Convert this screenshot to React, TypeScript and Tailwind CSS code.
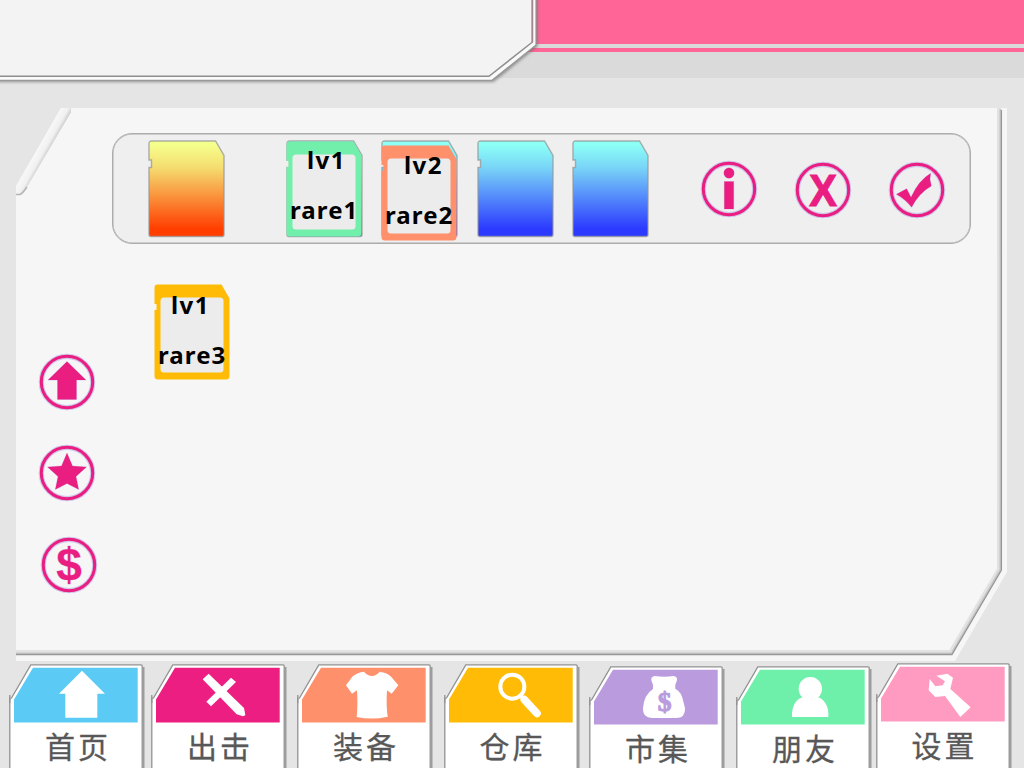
import type { ReactNode } from "react";

const CARD_PATH =
  "M3.5 1 H67.5 L76 15.5 V94.5 Q76 96.5 74 96.5 H3 Q1 96.5 1 94.5 V27.5 H3.5 V20 H1 V3.5 Q1 1 3.5 1 Z";

function SlotCard({ id, from, mid, to }: { id: string; from: string; mid: string; to: string }) {
  return (
    <svg width="77" height="98" viewBox="0 0 77 98" className="block">
      <defs>
        <linearGradient id={id} x1="0" y1="0" x2="0" y2="1">
          <stop offset="0.04" stopColor={from} />
          <stop offset="0.28" stopColor={mid} />
          <stop offset="0.92" stopColor={to} />
        </linearGradient>
      </defs>
      <path d={CARD_PATH} fill={`url(#${id})`} stroke="#969696" strokeOpacity="0.75" strokeWidth="1.4" />
    </svg>
  );
}

function ItemCard({ color, level, rare, shift = "" }: { color: string; level: string; rare: string; shift?: string }) {
  return (
    <div className="relative h-[96px] w-[76px] font-['Noto_Sans',sans-serif] text-[24px] leading-[30px] font-bold text-black">
      <svg width="76" height="96" viewBox="0 0 76 96" className="absolute inset-0">
        <path
          d="M3.5 .5 H67.5 L75.5 14.5 V92 Q75.5 95.5 72 95.5 H4 Q.5 95.5 .5 92 V26 H2.5 V20 H.5 V3.5 Q.5 .5 3.5 .5 Z"
          fill={color}
        />
        <rect x="6.5" y="13.5" width="63" height="75" rx="3.5" fill="#ececec" />
      </svg>
      <div className="relative flex flex-col whitespace-nowrap">
        <span className={`pl-[17px] tracking-[1.4px] ${shift}`}>{level}</span>
        <span className="mt-[20px] pl-[4px] tracking-[1.1px]">{rare}</span>
      </div>
    </div>
  );
}

function RoundButton({ label, children }: { label: string; children: ReactNode }) {
  return (
    <button aria-label={label} className="block size-[58px]">
      <svg width="58" height="58" viewBox="-29 -29 58 58" fill="#e91e80">
        <circle r="25.7" fill="none" stroke="#b9a6e6" strokeOpacity="0.6" strokeWidth="5.2" />
        <circle r="25.7" fill="none" stroke="#e91e80" strokeWidth="3" />
        <g stroke="#c9b5ec" strokeOpacity="0.6" strokeWidth="1" paintOrder="stroke">
          {children}
        </g>
      </svg>
    </button>
  );
}

type Tab = { label: string; color: string; place: string; icon: ReactNode };

const tabs: Tab[] = [
  {
    label: "首页",
    color: "#5bcaf5",
    place: "ml-[9px] mt-[3px]",
    icon: <path transform="translate(-27 -57)" d="M246 77 L315 146 H292 V218 H196 V146 H177 Z" />,
  },
  {
    label: "出击",
    color: "#ed1e82",
    place: "ml-[7px] mt-[3px]",
    icon: (
      <g transform="translate(-453 -57)">
        <path d="M626 86 L732 189 L736 211 L729 214 L710 208 L608 103 Z" strokeLinejoin="round" />
        <path d="M693 98 L708 111 L633 184 L619 170 Z" />
      </g>
    ),
  },
  {
    label: "装备",
    color: "#ff906c",
    place: "ml-[11px] mt-[3px]",
    icon: (
      <path
        transform="translate(-21 -57)"
        d="M222 80 Q246 106 269 80 Q292 83 304 96 L325 121 L305 146 L291 136 Q288 180 293 215 Q246 226 200 216 Q204 180 201 136 L186 146 L168 121 L188 94 Q202 82 222 80 Z"
      />
    ),
  },
  {
    label: "仓库",
    color: "#ffbb05",
    place: "ml-[11.5px] mt-[3px]",
    icon: (
      <g transform="translate(-460 -57)" fill="none" stroke="white">
        <circle cx="665" cy="125" r="36" strokeWidth="12" />
        <path d="M690 152 L704 168" strokeWidth="12" />
        <path d="M701 164 L739 205" strokeWidth="23" strokeLinecap="round" />
      </g>
    ),
  },
  {
    label: "市集",
    color: "#b99bde",
    place: "ml-[10.5px] mt-[5px]",
    icon: (
      <g transform="translate(-27 -63)">
        <path d="M224 93 Q253 97 281 93 Q295 96 290 109 Q284 119 286 131 Q305 142 309 166 L315 189 Q317 219 288 219 H216 Q187 219 189 190 Q192 149 219 132 Q221 119 215 109 Q210 96 224 93 Z" />
        <text
          x="254"
          y="199"
          textAnchor="middle"
          stroke="#b99bde"
          strokeWidth="3"
          className="font-['Liberation_Serif',serif] text-[83px] font-bold"
          fill="#b99bde"
        >
          $
        </text>
      </g>
    ),
  },
  {
    label: "朋友",
    color: "#6ef0ab",
    place: "ml-[12px] mt-[5px]",
    icon: (
      <g transform="translate(-468 -63)">
        <circle cx="691" cy="131" r="35" />
        <path d="M636 216 C635 180 650 160 671 156 L691 150 L711 156 C733 160 748 185 745 216 Z" />
      </g>
    ),
  },
  {
    label: "设置",
    color: "#ff9bc1",
    place: "ml-[4.5px] mt-[2px]",
    icon: (
      <path
        transform="translate(-48 -54)"
        d="M229 92 L262 86 L279 98 L271 132 L332 187 L301 216 L255 153 L226 156 L206 136 L209 102 L226 124 L248 121 L255 109 Z"
      />
    ),
  },
];

function NavTab({ label, color, place, icon }: Tab) {
  return (
    <a className={`relative h-[101px] w-[135px] shrink-0 ${place}`}>
      <svg width="139" height="112" viewBox="0 0 139 112" className="absolute top-0 left-0">
        <path d="M134.6 3 V112" stroke="#777777" strokeOpacity="0.65" strokeWidth="1.8" />
        <path d="M.8 112 V34.5 L2.5 34 L21.8 .8 H132 Q133.2 .8 133.2 2 V112 Z" fill="white" stroke="#929292" strokeWidth="1.3" />
        <path d="M.8 31 V39" stroke="#929292" strokeWidth="1.3" />
        <path d="M24 3.7 H128.7 V58.5 H5 V35.5 Z" fill={color} />
        <g transform="scale(.33333)" fill="white">
          {icon}
        </g>
      </svg>
      <span className="relative block pt-[65px] pl-[36px] font-['Noto_Sans_CJK_SC',sans-serif] text-[30px] leading-[32px] tracking-[3px] whitespace-nowrap text-[#585858] [-webkit-text-stroke:0.3px_#585858]">
        {label}
      </span>
    </a>
  );
}

function Header() {
  return (
    <header className="grid h-[108px] w-full shrink-0">
      <div className="[grid-area:1/1]">
        <div className="h-[44px] bg-[#ff6597]" />
        <div className="h-[4px] bg-[#dadada]" />
        <div className="h-[4px] bg-[#ff6597]" />
        <div className="h-[26px] bg-[#dadada]" />
      </div>
      <div className="relative h-[88px] w-[545px] [grid-area:1/1]">
        <svg width="545" height="108" viewBox="0 0 545 108" className="absolute top-0 left-0">
          <defs>
            <filter id="soft" x="-5%" y="-10%" width="110%" height="125%">
              <feGaussianBlur stdDeviation="1.5" />
            </filter>
          </defs>
          <path d="M-5 78 H510 L505 108 H-5 Z" fill="#e5e5e5" />
          <path d="M-8 -8 H537.5 V46.5 L493.5 82 H-8 Z" fill="#666666" fillOpacity="0.65" filter="url(#soft)" />
          <path d="M-8 -8 H536 V45 L492 80.3 H-8 Z" fill="#fafafa" stroke="#999999" strokeWidth="1.2" />
          <path d="M-8 -8 H532.5 V42 L489 76.3 H-8 Z" fill="#f3f3f3" stroke="#8e8e8e" strokeWidth="1.5" />
          <path d="M532 0 V42" stroke="#b77a8f" strokeWidth="1" />
        </svg>
      </div>
    </header>
  );
}

function PanelFrame() {
  return (
    <svg width="991" height="553" viewBox="16 108 991 553" className="absolute top-0 left-0">
      <defs>
        <linearGradient id="bevel" gradientUnits="userSpaceOnUse" x1="38.5" y1="148.5" x2="49" y2="154.5">
          <stop offset="0" stopColor="#f7f7f7" />
          <stop offset="0.5" stopColor="#f0f0f0" />
          <stop offset="0.78" stopColor="#d4d4d4" />
          <stop offset="1" stopColor="#8a8a8a" />
        </linearGradient>
      </defs>
      <path d="M16 108 H61 L16 187 Z" fill="#e5e5e5" />
      <path d="M61 108 H71 V112 L27 187 Q22 195 19 195 H16 V186 Z" fill="url(#bevel)" />
      <path d="M16 194.5 H20 Q23 193 27 187" fill="none" stroke="#b5b5b5" strokeWidth="1.5" />
      <g fill="none">
        <path d="M999 108 V569 L950.5 652 H16" stroke="#e2e2e2" strokeWidth="4" />
        <path d="M1000.3 109 V569.5 L951.4 653.5 H16" stroke="#c8c8c8" strokeWidth="1.8" />
        <path d="M1001.4 110 V570 L952 654.5 H16" stroke="#979797" strokeWidth="1.3" />
      </g>
    </svg>
  );
}

export default function App() {
  return (
    <div className="flex h-[768px] w-[1024px] flex-col overflow-hidden bg-[#e5e5e5]">
      <Header />

      <section className="relative ml-[16px] flex h-[553px] w-[991px] shrink-0 bg-[#f6f6f6] [clip-path:polygon(0_0,100%_0,100%_464px,939px_100%,0_100%)]">
        <PanelFrame />
        <aside className="relative flex w-[96px] shrink-0 flex-col pt-[244.6px] pl-[22px]">
          <RoundButton label="升级">
            <path d="M0 -20.5 L19 -2 H9.5 V17.5 H-9.5 V-2 H-19 Z" />
          </RoundButton>
          <div className="mt-[33px]">
            <RoundButton label="收藏">
              <path d="M0 -20 L5.5 -7 L19.5 -6 L9 3.5 L11.7 16.5 L0 10.5 L-11.7 16.5 L-9 3.5 L-19.5 -6 L-5.5 -7 Z" />
            </RoundButton>
          </div>
          <div className="mt-[34px] ml-[2px]">
            <RoundButton label="出售">
              <text y="16" textAnchor="middle" className="font-['Liberation_Sans',sans-serif] text-[46px] font-bold">
                $
              </text>
            </RoundButton>
          </div>
        </aside>

        <main className="relative flex flex-col pt-[25px]">
          <div className="flex h-[111px] w-[859px] items-start rounded-[20px] border border-[#acacac] bg-[#efefef] pt-[6px] pl-[35px] shadow-[inset_0_0_0_0.5px_#acacac]">
            <SlotCard id="slot-fire" from="#f5ff8c" mid="#f5dc70" to="#ff3e00" />
            <div className="relative ml-[61px]">
              <SlotCard id="slot-a" from="#8cfff7" mid="#79d4f7" to="#2c3aff" />
              <div className="absolute top-[1px] left-0">
                <ItemCard color="#72efaa" level="lv1" rare="rare1" shift="ml-[4px] mt-[4px]" />
              </div>
            </div>
            <div className="relative ml-[18px]">
              <SlotCard id="slot-b" from="#8cfff7" mid="#79d4f7" to="#2c3aff" />
              <div className="absolute top-[5px] left-0">
                <ItemCard color="#ff906c" level="lv2" rare="rare2" shift="ml-[6px] mt-[5px]" />
              </div>
            </div>
            <div className="ml-[18.5px]">
              <SlotCard id="slot-c" from="#8cfff7" mid="#79d4f7" to="#2c3aff" />
            </div>
            <div className="ml-[18px]">
              <SlotCard id="slot-d" from="#8cfff7" mid="#79d4f7" to="#2c3aff" />
            </div>
            <div className="mt-[20px] ml-[51.5px] flex gap-[36px]">
              <RoundButton label="信息">
                <circle cy="-16" r="5.2" />
                <rect x="-4.7" y="-7.5" width="9.4" height="27.5" />
              </RoundButton>
              <div className="pt-[1px]">
                <RoundButton label="取消">
                  <text
                    y="15.5"
                    textAnchor="middle"
                    transform="scale(.92 1)"
                    stroke="#e91e80"
                    strokeOpacity="1"
                    strokeWidth="1.2"
                    className="font-['Liberation_Sans',sans-serif] text-[45px] font-bold"
                  >
                    X
                  </text>
                </RoundButton>
              </div>
              <div className="pt-[1px]">
                <RoundButton label="确认">
                  <path
                    transform="scale(.3333) translate(-681 -284)"
                    strokeWidth="3"
                    d="M619 297 L650 280 L663 306 Q686 255 722 234 L720 252 L724 272 Q687 293 665 336 Q645 311 619 297 Z"
                  />
                </RoundButton>
              </div>
            </div>
          </div>
          <div className="mt-[40px] ml-[42px]">
            <ItemCard color="#ffbb05" level="lv1" rare="rare3" shift="mt-[6px]" />
          </div>
        </main>
      </section>

      <nav className="flex h-[107px] w-full shrink-0 items-start">
        {tabs.map((tab) => (
          <NavTab key={tab.label} {...tab} />
        ))}
      </nav>
    </div>
  );
}
